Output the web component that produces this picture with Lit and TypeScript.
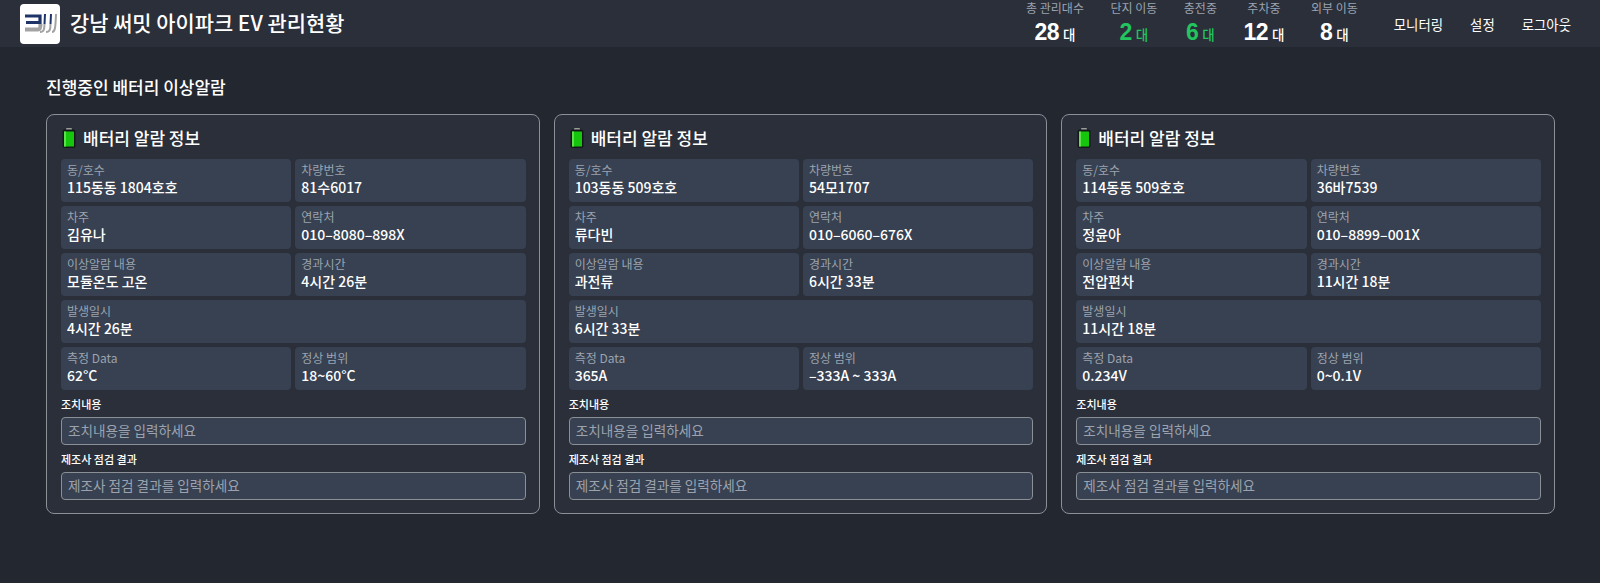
import { LitElement, css, html, svg } from 'lit';
import { customElement } from 'lit/decorators.js';

interface Alarm {
  unit: string;
  plate: string;
  owner: string;
  phone: string;
  alarm: string;
  elapsed: string;
  measured: string;
  range: string;
}

const stats = [
  { label: '총 관리대수', value: '28', green: false },
  { label: '단지 이동', value: '2', green: true },
  { label: '충전중', value: '6', green: true },
  { label: '주차중', value: '12', green: false },
  { label: '외부 이동', value: '8', green: false },
];

const alarms: Alarm[] = [
  { unit: '115동동 1804호호', plate: '81수6017', owner: '김유나', phone: '010–8080–898X', alarm: '모듈온도 고온', elapsed: '4시간 26분', measured: '62°C', range: '18~60°C' },
  { unit: '103동동 509호호', plate: '54모1707', owner: '류다빈', phone: '010–6060–676X', alarm: '과전류', elapsed: '6시간 33분', measured: '365A', range: '–333A ~ 333A' },
  { unit: '114동동 509호호', plate: '36바7539', owner: '정윤아', phone: '010–8899–001X', alarm: '전압편차', elapsed: '11시간 18분', measured: '0.234V', range: '0~0.1V' },
];

const battery = svg`<svg class="battery" viewBox="0 0 14 20" width="14" height="20">
  <rect x="4" y="0" width="6" height="3" rx="1" fill="#9a9f9a"></rect>
  <rect x="0.5" y="1.5" width="13" height="18.5" rx="2.5" fill="#14181a"></rect>
  <rect x="2" y="3.5" width="10" height="15" rx="0.5" fill="#16c60c"></rect>
  <rect x="2" y="3.5" width="2" height="15" fill="#5fe04f"></rect>
</svg>`;

const logo = svg`<svg viewBox="0 0 40 40" width="40" height="40">
  <path d="M5 12H20V20M6 18.5H20" fill="none" stroke="#1f3468" stroke-width="3.2"></path>
  <path d="M25 10L24.5 20M31 10L30.5 20" fill="none" stroke="#1f3468" stroke-width="2"></path>
  <path d="M5 25.5H18C20 25.5 20.5 24 20.5 20" fill="none" stroke="#a3a3a5" stroke-width="4"></path>
  <path d="M20 28C24 28 24.5 25 24.5 20M26 28C30 28 30.5 25 30.5 20M32 28C35 28 35.5 24 36 10" fill="none" stroke="#a3a3a5" stroke-width="2"></path>
</svg>`;

@customElement('app-root')
export default class AppRoot extends LitElement {
  private cell(label: string, value: string, wide = false) {
    return html`<div class="cell ${wide ? 'wide' : ''}">
      <div class="cell-label">${label}</div>
      <div class="cell-value">${value}</div>
    </div>`;
  }

  private card(a: Alarm) {
    return html`<div class="card">
      <div class="card-title">${battery}<span>배터리 알람 정보</span></div>
      <div class="grid">
        ${this.cell('동/호수', a.unit)}
        ${this.cell('차량번호', a.plate)}
        ${this.cell('차주', a.owner)}
        ${this.cell('연락처', a.phone)}
        ${this.cell('이상알람 내용', a.alarm)}
        ${this.cell('경과시간', a.elapsed)}
        ${this.cell('발생일시', a.elapsed, true)}
        ${this.cell('측정 Data', a.measured)}
        ${this.cell('정상 범위', a.range)}
      </div>
      <label class="field-label">조치내용</label>
      <input class="field" placeholder="조치내용을 입력하세요" />
      <label class="field-label">제조사 점검 결과</label>
      <input class="field" placeholder="제조사 점검 결과를 입력하세요" />
    </div>`;
  }

  render() {
    return html`
      <header>
        <div class="brand">
          <div class="logo">${logo}</div>
          <h1>강남 써밋 아이파크 EV 관리현황</h1>
        </div>
        <div class="right">
          <div class="stats">
            ${stats.map(
              (s) => html`<div class="stat">
                <div class="stat-label">${s.label}</div>
                <div class="stat-value ${s.green ? 'green' : ''}"><b>${s.value}</b><span>대</span></div>
              </div>`,
            )}
          </div>
          <nav>
            <a>모니터링</a>
            <a>설정</a>
            <a>로그아웃</a>
          </nav>
        </div>
      </header>
      <main>
        <h2>진행중인 배터리 이상알람</h2>
        <div class="cards">${alarms.map((a) => this.card(a))}</div>
      </main>
    `;
  }

  static styles = css`
    :host {
      display: block;
      height: 583px;
      background: #23272f;
      color: #fff;
      font-family: 'Noto Sans CJK KR', 'Noto Sans', sans-serif;
      overflow: hidden;
    }

    header {
      height: 47px;
      background: #2a2f3a;
      display: flex;
      align-items: center;
      justify-content: space-between;
      padding: 0 29px 0 20px;
    }

    .brand {
      display: flex;
      align-items: center;
      gap: 10px;
    }

    .logo {
      width: 40px;
      height: 40px;
      background: #fff;
      border-radius: 4px;
    }

    h1 {
      margin: 0;
      padding-bottom: 4px;
      font-size: 20.9px;
      font-weight: 500;
      line-height: 28px;
    }

    .right {
      display: flex;
      align-items: center;
      gap: 36px;
    }

    .stats {
      display: flex;
      gap: 26.5px;
    }

    .stat {
      text-align: center;
    }

    .stat-label {
      font-size: 12px;
      line-height: 14px;
      margin-bottom: 4px;
      color: #9ca3af;
    }

    .stat-value {
      line-height: 26px;
      white-space: nowrap;
    }

    .stat-value b {
      font-family: 'Liberation Sans', sans-serif;
      font-size: 23px;
      font-weight: 700;
      letter-spacing: -0.5px;
    }

    .stat-value span {
      font-size: 13.5px;
      font-weight: 500;
      margin-left: 4px;
    }

    .green {
      color: #22c55e;
    }

    nav {
      display: flex;
      gap: 27px;
      font-size: 13.4px;
    }

    main {
      padding: 29px 45px 0 46px;
    }

    h2 {
      margin: 0 0 16px;
      font-size: 17px;
      font-weight: 500;
      line-height: 22px;
    }

    .cards {
      display: grid;
      grid-template-columns: repeat(3, 1fr);
      gap: 14px;
    }

    .card {
      border: 1px solid #8b8f96;
      border-radius: 8px;
      background: #2a2f3a;
      padding: 10px 13px 13px 14px;
    }

    .card-title {
      display: flex;
      align-items: center;
      gap: 7px;
      font-size: 17px;
      font-weight: 500;
      line-height: 26px;
      margin-bottom: 8px;
    }

    .battery {
      margin-left: 1px;
    }

    .grid {
      display: grid;
      grid-template-columns: 1fr 1fr;
      gap: 4px;
    }

    .cell {
      background: #374151;
      border-radius: 4px;
      padding: 3px 6px;
      height: 43px;
      box-sizing: border-box;
    }

    .wide {
      grid-column: 1 / -1;
    }

    .cell-label {
      font-size: 12px;
      line-height: 15px;
      color: #9ca3af;
    }

    .cell-value {
      font-size: 14px;
      font-weight: 500;
      line-height: 20px;
    }

    .field-label {
      display: block;
      font-size: 11px;
      font-weight: 500;
      line-height: 16px;
      margin: 6px 0 5px;
    }

    .field {
      display: block;
      width: 100%;
      height: 28px;
      box-sizing: border-box;
      background: #374151;
      border: 1px solid #8b8f96;
      border-radius: 4px;
      padding: 0 6px 3px;
      font: inherit;
      font-size: 13.6px;
      color: #fff;
      outline: none;
    }

    .field::placeholder {
      color: #9ca3af;
      opacity: 1;
    }
  `;
}

declare global {
  interface HTMLElementTagNameMap {
    'app-root': AppRoot;
  }
}
